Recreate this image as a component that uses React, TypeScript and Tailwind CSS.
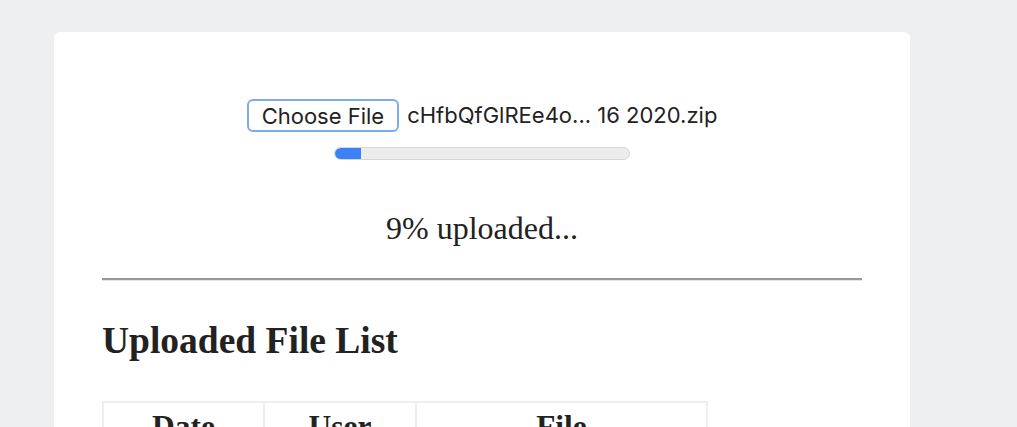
import React from 'react';

const App: React.FC = () => {
    const progress = 9;

    return (
        <div className="min-h-screen bg-[#eeeff1] pt-[32px] pl-[54px] overflow-hidden">
            <div className="w-[856px] bg-white rounded-[6px] px-[48px] pt-[67px] pb-10 min-h-[500px]">
                <div className="flex flex-col items-center">
                    <div className="flex items-center gap-[8px] font-['Inter',sans-serif] text-[22px] text-[#222]">
                        <button className="h-[33px] px-[13px] rounded-[6px] border-[2.5px] border-[#7eaaf3] bg-white text-[#222] leading-none">
                            Choose File
                        </button>
                        <span>cHfbQfGlREe4o... 16 2020.zip</span>
                    </div>
                    <div className="mt-[15px] w-[296px] h-[13px] rounded-full bg-[#ececec] border border-[#d6d6d6] overflow-hidden">
                        <div className="h-full bg-[#3b82f6] rounded-l-full" style={{ width: `${progress}%` }} />
                    </div>
                    <p className="mt-[52px] font-['Liberation_Serif',serif] text-[32px] leading-none text-[#222]">
                        {progress}% uploaded...
                    </p>
                </div>

                <div className="mt-[34px] h-[3px] border-t-2 border-[#9a9a9a] border-b border-b-[#e4e4e4]" />

                <h2 className="mt-[41px] font-['Liberation_Serif',serif] font-bold text-[37.5px] leading-none text-[#222]">
                    Uploaded File List
                </h2>

                <table className="mt-[41px] border-collapse font-['Liberation_Serif',serif] text-[#222]">
                    <thead>
                        <tr>
                            <th className="w-[161px] border-2 border-[#eeeeee] text-[31.5px] leading-none font-bold pt-[8px] pb-[8px]">Date</th>
                            <th className="w-[152px] border-2 border-[#eeeeee] text-[31.5px] leading-none font-bold pt-[8px] pb-[8px]">User</th>
                            <th className="w-[291px] border-2 border-[#eeeeee] text-[31.5px] leading-none font-bold pt-[8px] pb-[8px]">File</th>
                        </tr>
                    </thead>
                </table>
            </div>
        </div>
    );
};

export default App;
